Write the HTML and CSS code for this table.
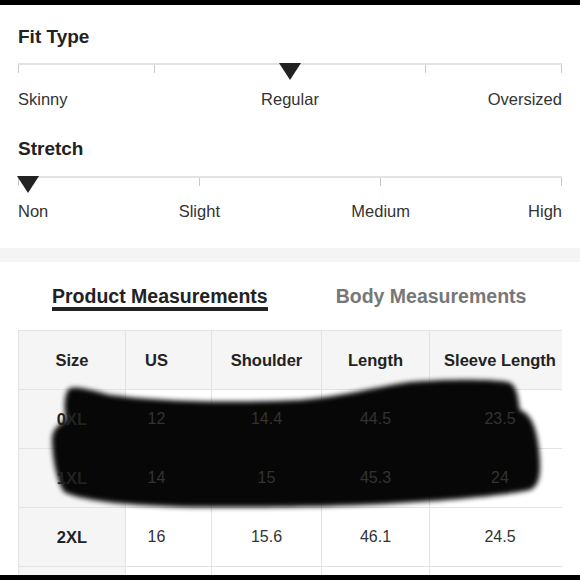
FILE: index.html
```html
<!DOCTYPE html>
<html lang="en">
<head>
<meta charset="utf-8">
<title>Size details</title>
<link rel="stylesheet" href="styles.css">
</head>
<body>
<div class="page">
  <div class="frame-bar"></div>
  <div class="main">
    <section class="attrs">
      <div class="attr">
        <h2 class="attr-title">Fit Type</h2>
        <div class="scale">
          <div class="track"><span class="tick"></span><span class="tick"></span><span class="tick"></span><span class="tick"></span><span class="tick"></span></div>
          <span class="marker marker-mid"></span>
        </div>
        <div class="labels labels-3"><span class="lab-l">Skinny</span><span class="lab-c">Regular</span><span class="lab-r">Oversized</span></div>
      </div>
      <div class="attr attr-next">
        <h2 class="attr-title">Stretch</h2>
        <div class="scale">
          <div class="track"><span class="tick"></span><span class="tick"></span><span class="tick"></span><span class="tick"></span></div>
          <span class="marker marker-start"></span>
        </div>
        <div class="labels labels-6"><span class="lab-l">Non</span><span class="lab-c span2">Slight</span><span class="lab-c span2">Medium</span><span class="lab-r">High</span></div>
      </div>
    </section>
    <div class="band"></div>
    <section class="measure">
      <div class="tabs">
        <span class="tab tab-active">Product Measurements</span>
        <span class="tab">Body Measurements</span>
      </div>
      <div class="table-wrap">
        <table class="size-table">
          <colgroup><col class="c1"><col class="c2"><col class="c3"><col class="c4"><col class="c5"></colgroup>
          <thead>
            <tr><th class="size">Size</th><th class="us">US</th><th>Shoulder</th><th>Length</th><th>Sleeve Length</th></tr>
          </thead>
          <tbody>
            <tr><td class="size"><span class="t">0XL</span></td><td class="us"><span class="t">12</span></td><td><span class="t">14.4</span></td><td><span class="t">44.5</span></td><td><span class="t">23.5</span></td></tr>
            <tr><td class="size"><span class="t">1XL</span></td><td class="us"><span class="t">14</span></td><td><span class="t">15</span></td><td><span class="t">45.3</span></td><td><span class="t">24</span></td></tr>
            <tr><td class="size"><span class="t">2XL</span></td><td class="us"><span class="t">16</span></td><td><span class="t">15.6</span></td><td><span class="t">46.1</span></td><td><span class="t">24.5</span></td></tr>
            <tr><td class="size"></td><td class="us"></td><td></td><td></td><td></td></tr>
          </tbody>
        </table>
        <svg class="scribble" width="544" height="250" viewBox="0 0 544 250" aria-hidden="true">
          <defs><filter id="soft" x="-10%" y="-20%" width="120%" height="140%"><feGaussianBlur stdDeviation="2.6"/></filter></defs>
          <g transform="translate(-18,-330)" filter="url(#soft)">
            <path fill="#000" d="M68,390 C72,384 90,390 110,395 C160,402 240,403 300,400 C340,397 370,388 410,382 C450,379 490,379 508,382 C518,385 518,400 520,410 C532,414 537,430 539,450 C541,470 541,485 530,490 C500,496 450,500 400,503 C340,507 250,508 180,507 C120,505 80,500 64,492 C56,480 52,455 52,438 C53,428 60,424 66,420 C64,410 64,396 68,390 Z"/>
          </g>
        </svg>
      </div>
    </section>
  </div>
  <div class="frame-bar"></div>
</div>
</body>
</html>
```
FILE: styles.css
```css
html, body {
  margin: 0;
  padding: 0;
  background: #000;
}
.page {
  width: 580px;
  height: 580px;
  display: flex;
  flex-direction: column;
  overflow: hidden;
  font-family: "Liberation Sans", Arial, sans-serif;
  color: #333;
}
.frame-bar {
  height: 5px;
  flex: 0 0 5px;
  background: #000;
}
.main {
  flex: 1 1 auto;
  overflow: hidden;
  background: #fff;
}
.attrs {
  padding: 21px 18px 27px;
}
.attr-next {
  margin-top: 29px;
}
.attr-title {
  margin: 0;
  font-size: 19px;
  line-height: 22px;
  font-weight: bold;
  color: #222;
}
.scale {
  position: relative;
  margin-top: 15px;
}
.attr-next .scale {
  margin-top: 16px;
}
.track {
  height: 7px;
  border-top: 2px solid #e3e3e3;
  display: flex;
  justify-content: space-between;
}
.tick {
  width: 1px;
  height: 8px;
  background: #c9c9c9;
}
.marker {
  position: absolute;
  top: 0;
  width: 0;
  height: 0;
  border-left: 11.5px solid transparent;
  border-right: 11.5px solid transparent;
  border-top: 17px solid #222;
}
.marker-mid {
  left: 50%;
  transform: translateX(-50%);
}
.marker-start {
  left: -1px;
}
.labels {
  margin-top: 17px;
  display: grid;
  font-size: 16.5px;
  line-height: 20px;
  color: #333;
}
.attr-next .labels {
  margin-top: 16px;
}
.labels-3 {
  grid-template-columns: 1fr 1fr 1fr;
}
.labels-6 {
  grid-template-columns: repeat(6, 1fr);
}
.span2 {
  grid-column: span 2;
}
.lab-l { text-align: left; }
.lab-c { text-align: center; }
.lab-r { text-align: right; }
.band {
  height: 14px;
  background: #f4f4f4;
}
.measure {
  padding: 23px 18px 0;
}
.tabs {
  display: flex;
  gap: 68px;
  padding-left: 34px;
}
.tab {
  font-size: 19.5px;
  line-height: 22px;
  font-weight: bold;
  color: #777;
  border-bottom: 4px solid transparent;
}
.tab-active {
  color: #222;
  border-bottom-color: #222;
}
.table-wrap {
  position: relative;
  margin-top: 19px;
  width: 544px;
  overflow: hidden;
}
.size-table {
  border-collapse: collapse;
  table-layout: fixed;
  width: 552px;
}
.c1 { width: 107px; }
.c2 { width: 86px; }
.c3 { width: 110px; }
.c4 { width: 108px; }
.c5 { width: 141px; }
.size-table th,
.size-table td {
  border: 1px solid #e3e3e3;
  height: 58px;
  padding: 0;
  text-align: center;
  vertical-align: middle;
  font-size: 16px;
}
.size-table th {
  background: #f5f5f5;
  font-weight: bold;
  font-size: 16.5px;
  color: #222;
}
.size-table td {
  color: #333;
}
.size-table td.size {
  background: #f5f5f5;
  font-weight: bold;
  font-size: 16.5px;
  color: #222;
}
.size-table .us {
  padding-right: 24px;
}
.t {
  position: relative;
  z-index: 2;
}
.scribble {
  position: absolute;
  left: 0;
  top: 0;
  z-index: 1;
  pointer-events: none;
  opacity: 0.97;
}
```
